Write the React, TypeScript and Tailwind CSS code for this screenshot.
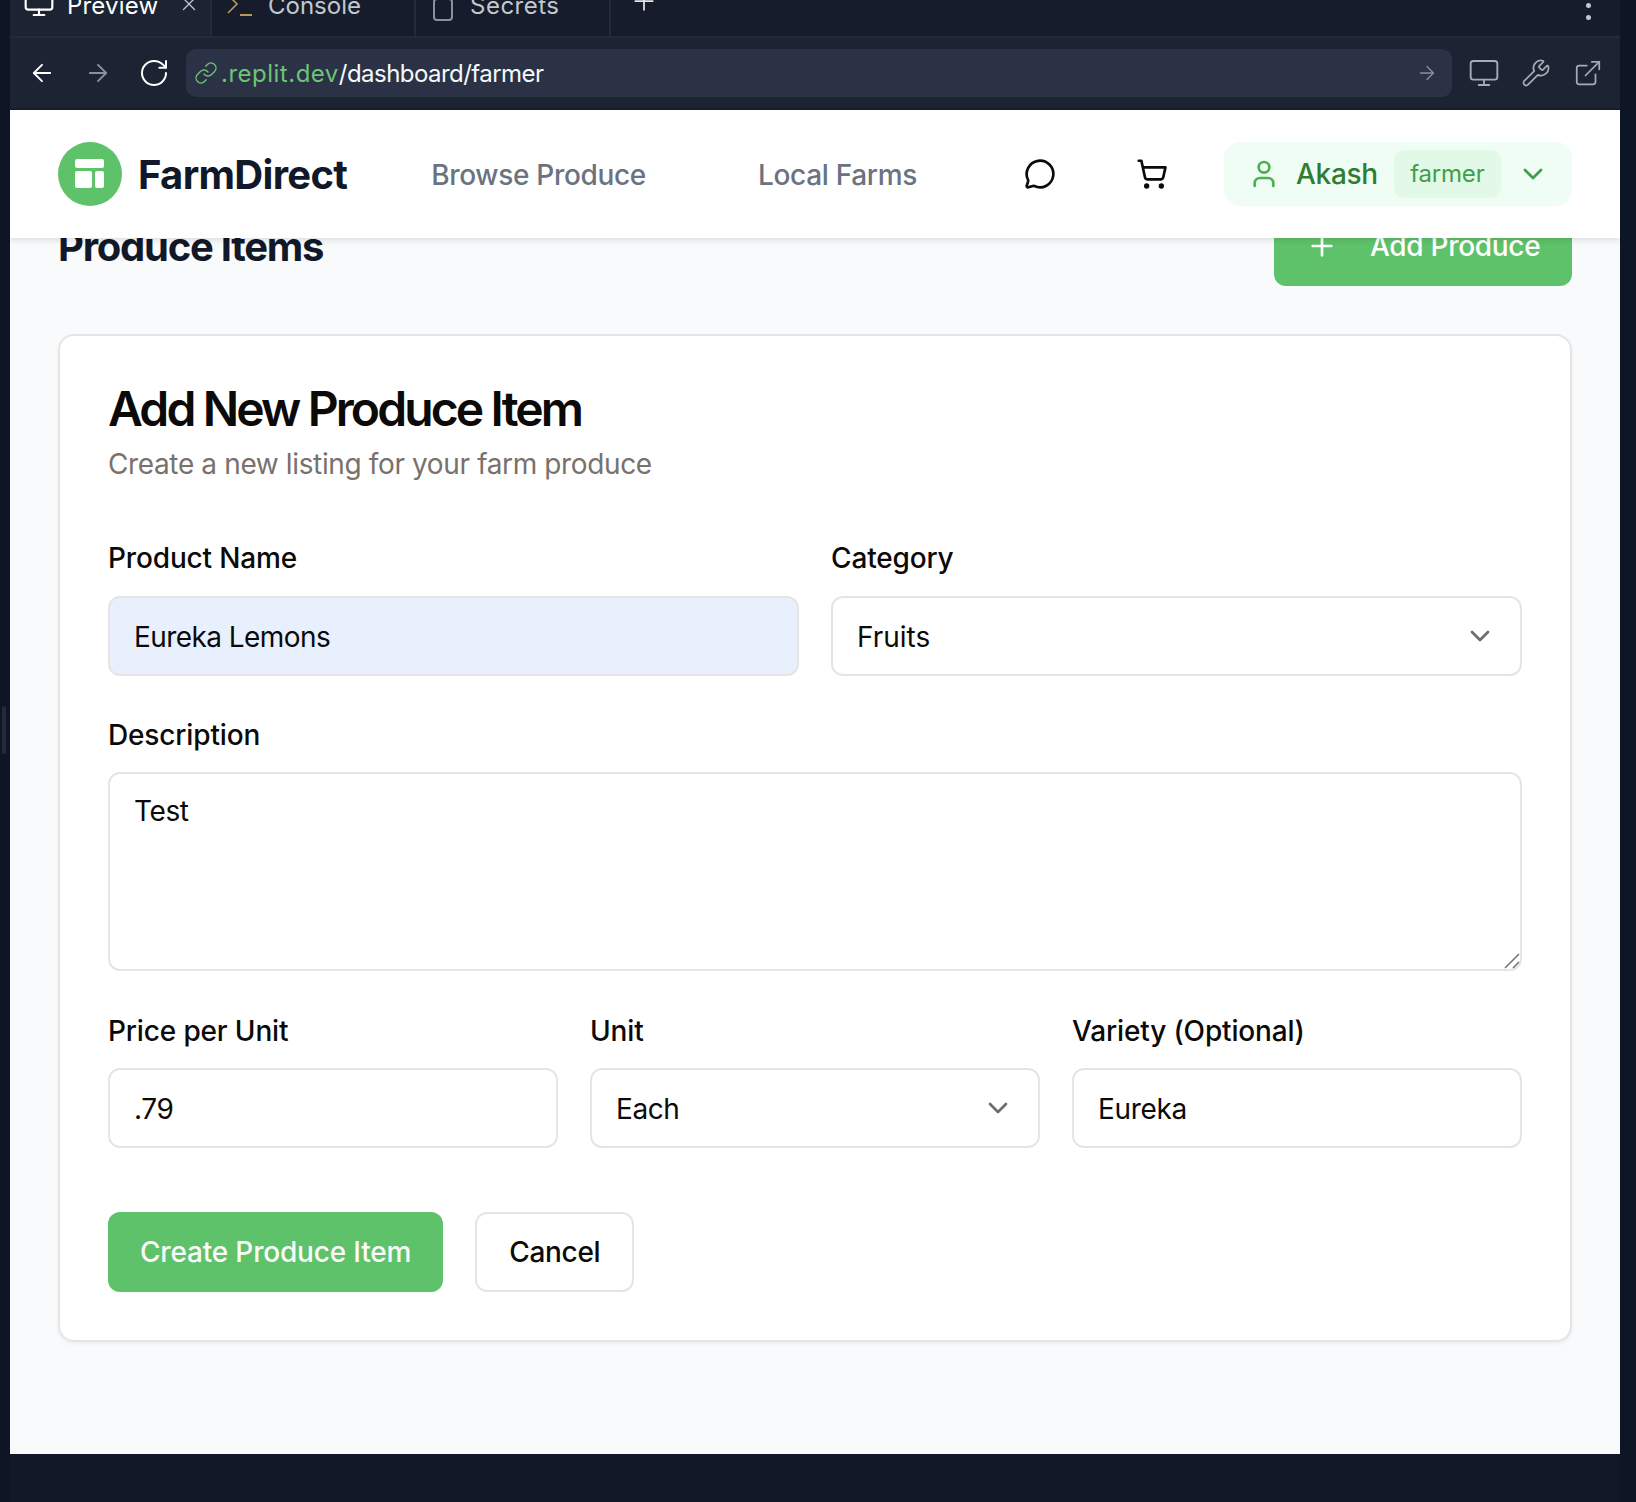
import { ArrowLeft, ArrowRight, ChevronDown, ExternalLink, Link, MessageCircle, Monitor, Plus, RotateCw, ShoppingCart, User, Wrench, X } from "lucide-react";

const Label = ({ children, low }: { children: React.ReactNode; low?: boolean }) => (
  <div className={`text-[28px] leading-[40px] font-medium tracking-[-0.15px] text-[#0c0a09] ${low ? "pt-[1px] mb-[17px]" : "mb-[18px]"}`}>{children}</div>
);

const TextField = ({ value, autofill }: { value: string; autofill?: boolean }) => (
  <input
    readOnly
    value={value}
    className={`w-full h-[80px] px-[24px] pt-[2px] border-2 border-[#e7e5e4] rounded-[12px] text-[28px] text-[#0c0a09] outline-none ${autofill ? "bg-[#e8f0fe] tracking-[-0.56px]" : "bg-white tracking-[-0.35px]"}`}
  />
);

const SelectField = ({ value }: { value: string }) => (
  <div className="w-full h-[80px] px-[24px] border-2 border-[#e7e5e4] rounded-[12px] bg-white flex items-center justify-between text-[28px] text-[#0c0a09]">
    <span className={value === "Each" ? "mt-[2px] tracking-[-0.4px]" : "mt-[1px]"}>{value}</span>
    <ChevronDown size={32} className="text-[#6f6b69]" />
  </div>
);

export default function App() {
  return (
    <div className="h-[1502px] w-[1636px] bg-[#111827] flex overflow-hidden font-['Inter',sans-serif]">
      <div className="w-[10px] shrink-0 bg-[#0e1525] pt-[706px]">
        <div className="w-[4px] h-[48px] ml-[2px] rounded-full bg-[#232a3b]" />
      </div>

      <div className="w-[1610px] h-[1454px] flex flex-col">
        {/* tabs */}
        <div className="h-[38px] shrink-0 bg-[#161c2b] flex border-b-2 border-[#232a3b] text-[24px] overflow-hidden relative">
          <div className="w-[200px] flex items-start -mt-[12px] pl-[13px] bg-[#1c2333] text-white">
            <Monitor size={32} strokeWidth={1.6} className="mt-[-1px] mr-[12px] text-white" />
            <span className="leading-[36px] tracking-[0.2px]">Preview</span>
            <X size={22} strokeWidth={1.4} className="ml-[20px] mt-[5px] text-[#c2c8cc]" />
          </div>
          <div className="w-[204px] flex items-start -mt-[12px] pl-[14px] border-l-2 border-[#232a3b] text-[#c2c8cc]">
            <svg width="28" height="32" viewBox="0 0 28 32" fill="none" className="mt-[3px] mr-[14px]">
              <path d="M2 4 L11 13 L2 22" stroke="#b59a5a" strokeWidth="1.6" />
              <path d="M14 24 H26" stroke="#b59a5a" strokeWidth="2" />
            </svg>
            <span className="leading-[36px]">Console</span>
          </div>
          <div className="w-[197px] flex items-start -mt-[12px] pl-[15px] border-l-2 border-r-2 border-[#232a3b] text-[#c2c8cc]">
            <svg width="24" height="32" viewBox="0 0 24 32" fill="none" className="mt-[3px] mr-[15px]">
              <rect x="3" y="8" width="18" height="21" rx="3" stroke="#8a909c" strokeWidth="2" />
              <path d="M7 8 V3 H17 V8" stroke="#8a909c" strokeWidth="2" />
            </svg>
            <span className="leading-[36px] tracking-[0.5px]">Secrets</span>
          </div>
          <div className="w-[65px] flex justify-center -mt-[14px]">
            <Plus size={30} strokeWidth={1.4} className="text-[#e4e7ea]" />
          </div>
          <div className="absolute left-[1576px] top-[3px] flex flex-col gap-[7px]">
            <span className="w-[5px] h-[5px] rounded-full bg-[#c2c8cc]" />
            <span className="w-[5px] h-[5px] rounded-full bg-[#c2c8cc]" />
          </div>
        </div>

        {/* address bar */}
        <div className="h-[72px] shrink-0 bg-[#1c2333] border-b-2 border-[#171d2c] flex items-center pl-[18px]">
          <ArrowLeft size={28} strokeWidth={1.6} className="text-white" />
          <ArrowRight size={28} strokeWidth={1.6} className="text-[#8a909c] ml-[28px]" />
          <RotateCw size={32} strokeWidth={1.5} className="text-white ml-[26px]" />
          <div className="ml-[16px] w-[1266px] h-[48px] rounded-[10px] bg-[#2b3245] flex items-center pl-[8px] pr-[14px] text-[24px] text-[#f5f9fc]">
            <Link size={24} strokeWidth={1.4} className="text-[#6cc574]" />
            <span className="ml-[3px] mt-[2px] text-[#6cc574] tracking-[0.5px]">.replit.dev</span>
            <span className="mt-[2px] tracking-[-0.55px]">/dashboard/farmer</span>
            <ArrowRight size={22} strokeWidth={1.5} className="text-[#8a909c] ml-auto" />
          </div>
          <Monitor size={32} strokeWidth={1.4} className="text-[#a6abb4] ml-[16px]" />
          <Wrench size={30} strokeWidth={1.4} className="text-[#a6abb4] ml-[21px]" />
          <ExternalLink size={30} strokeWidth={1.4} className="text-[#a6abb4] ml-[22px]" />
        </div>

        {/* page */}
        <div className="flex-1 bg-[#f9fafb] overflow-hidden">
          <header className="relative z-10 h-[128px] bg-white shadow-[0_2px_6px_rgba(0,0,0,0.12)] flex items-center px-[48px]">
            <div className="w-[64px] h-[64px] rounded-full bg-[#5ec26a] flex items-center justify-center">
              <svg width="30" height="30" viewBox="0 0 30 30" fill="white">
                <rect x="0" y="0" width="29" height="9" rx="2" />
                <rect x="0" y="12" width="17" height="17" rx="2" />
                <rect x="20" y="12" width="9" height="17" rx="2" />
              </svg>
            </div>
            <span className="ml-[16px] mt-[2px] text-[40px] font-bold tracking-[-0.7px] text-[#111827]">FarmDirect</span>
            <nav className="ml-[84px] mt-[1px] flex gap-[112px] text-[28px] font-medium tracking-[-0.32px] text-[#6b7280]">
              <span>Browse Produce</span>
              <span>Local Farms</span>
            </nav>
            <MessageCircle size={32} className="ml-[107px] text-[#0c0a09]" />
            <ShoppingCart size={32} className="ml-[80px] text-[#0c0a09]" />
            <div className="ml-auto h-[64px] w-[348px] rounded-[16px] bg-[#f0fdf4] flex items-center pl-[24px]">
              <User size={32} className="text-[#4caf50]" />
              <span className="ml-[16px] text-[28px] font-medium tracking-[-0.3px] text-[#2e7d32]">Akash</span>
              <span className="ml-[16px] w-[107px] h-[48px] rounded-[10px] bg-[#e3f9e7] flex items-center justify-center text-[24px] tracking-[-0.2px] text-[#3f9e4a]">farmer</span>
              <ChevronDown size={32} className="ml-[16px] text-[#3f9e4a]" />
            </div>
          </header>

          <main className="px-[48px] -mt-[32px]">
            <div className="flex items-center justify-between">
              <h1 className="mt-[2px] text-[40px] font-bold tracking-[-1.25px] text-[#111827]">Produce Items</h1>
              <button className="w-[298px] h-[80px] rounded-[12px] bg-[#5ec26a] text-white text-[28px] font-medium flex items-center px-[32px]">
                <Plus size={32} className="shrink-0" />
                <span className="ml-[32px] whitespace-nowrap tracking-[-0.3px]">Add Produce</span>
              </button>
            </div>

            <div className="mt-[48px] w-[1514px] rounded-[16px] border-2 border-[#e7e5e4] bg-white shadow-[0_2px_4px_rgba(0,0,0,0.05)] px-[48px] pt-[49px] pb-[48px]">
              <h2 className="text-[48px] leading-[48px] font-semibold tracking-[-0.06em] text-[#0c0a09]">Add New Produce Item</h2>
              <p className="mt-[11px] text-[28px] leading-[40px] tracking-[-0.37px] text-[#78716c]">Create a new listing for your farm produce</p>

              <div className="mt-[54px] grid grid-cols-2 gap-x-[32px]">
                <div>
                  <Label>Product Name</Label>
                  <TextField value="Eureka Lemons" autofill />
                </div>
                <div>
                  <Label>Category</Label>
                  <SelectField value="Fruits" />
                </div>
              </div>

              <div className="mt-[38px]">
                <Label low>Description</Label>
                <div className="relative">
                  <textarea
                    readOnly
                    value="Test"
                    className="block w-full h-[199px] px-[24px] pt-[17px] pb-[15px] border-2 border-[#e7e5e4] rounded-[12px] text-[28px] leading-[40px] tracking-[-0.4px] text-[#0c0a09] outline-none resize-none"
                  />
                  <svg width="16" height="16" viewBox="0 0 16 16" className="absolute right-[2px] bottom-[2px]" stroke="#6f6b69" strokeWidth="1.5">
                    <path d="M1 15 L15 1" />
                    <path d="M9 15 L15 9" />
                  </svg>
                </div>
              </div>

              <div className="mt-[39px] grid grid-cols-3 gap-x-[32px]">
                <div>
                  <Label low>Price per Unit</Label>
                  <TextField value=".79" />
                </div>
                <div>
                  <Label low>Unit</Label>
                  <SelectField value="Each" />
                </div>
                <div>
                  <Label low>Variety (Optional)</Label>
                  <TextField value="Eureka" />
                </div>
              </div>

              <div className="mt-[64px] flex gap-[32px]">
                <button className="h-[80px] px-[32px] rounded-[12px] bg-[#5ec26a] text-[#fafaf9] text-[28px] font-medium tracking-[-0.18px]">Create Produce Item</button>
                <button className="h-[80px] px-[32px] rounded-[12px] border-2 border-[#e7e5e4] bg-white text-[#0c0a09] text-[28px] font-medium tracking-[-0.3px]">Cancel</button>
              </div>
            </div>
          </main>
        </div>
      </div>

      <div className="flex-1 bg-[#0e1525]" />
    </div>
  );
}
